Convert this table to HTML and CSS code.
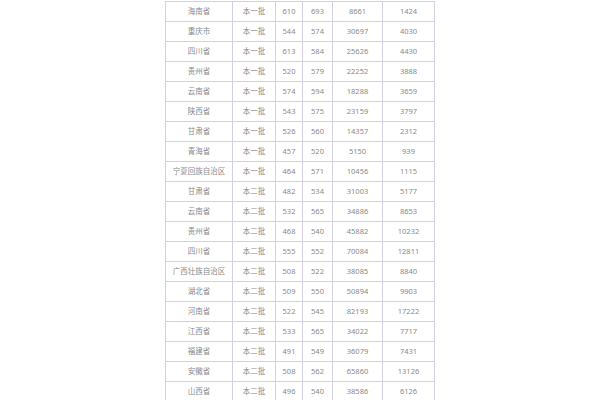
FILE: index.html
```html
<!DOCTYPE html>
<html lang="zh">
<head>
<meta charset="utf-8">
<link rel="stylesheet" href="styles.css">
</head>
<body>
<table class="score-table">
<colgroup>
<col class="c-prov"><col class="c-batch"><col class="c-a"><col class="c-b"><col class="c-c"><col class="c-d">
</colgroup>
<tbody>
<tr><td>海南省</td><td>本一批</td><td>610</td><td>693</td><td>8661</td><td>1424</td></tr>
<tr><td>重庆市</td><td>本一批</td><td>544</td><td>574</td><td>30697</td><td>4030</td></tr>
<tr><td>四川省</td><td>本一批</td><td>613</td><td>584</td><td>25626</td><td>4430</td></tr>
<tr><td>贵州省</td><td>本一批</td><td>520</td><td>579</td><td>22252</td><td>3888</td></tr>
<tr><td>云南省</td><td>本一批</td><td>574</td><td>594</td><td>18288</td><td>3659</td></tr>
<tr><td>陕西省</td><td>本一批</td><td>543</td><td>575</td><td>23159</td><td>3797</td></tr>
<tr><td>甘肃省</td><td>本一批</td><td>526</td><td>560</td><td>14357</td><td>2312</td></tr>
<tr><td>青海省</td><td>本一批</td><td>457</td><td>520</td><td>5150</td><td>939</td></tr>
<tr><td>宁夏回族自治区</td><td>本一批</td><td>464</td><td>571</td><td>10456</td><td>1115</td></tr>
<tr><td>甘肃省</td><td>本二批</td><td>482</td><td>534</td><td>31003</td><td>5177</td></tr>
<tr><td>云南省</td><td>本二批</td><td>532</td><td>565</td><td>34886</td><td>8653</td></tr>
<tr><td>贵州省</td><td>本二批</td><td>468</td><td>540</td><td>45882</td><td>10232</td></tr>
<tr><td>四川省</td><td>本二批</td><td>555</td><td>552</td><td>70084</td><td>12811</td></tr>
<tr><td>广西壮族自治区</td><td>本二批</td><td>508</td><td>522</td><td>38085</td><td>8840</td></tr>
<tr><td>湖北省</td><td>本二批</td><td>509</td><td>550</td><td>50894</td><td>9903</td></tr>
<tr><td>河南省</td><td>本二批</td><td>522</td><td>545</td><td>82193</td><td>17222</td></tr>
<tr><td>江西省</td><td>本二批</td><td>533</td><td>565</td><td>34022</td><td>7717</td></tr>
<tr><td>福建省</td><td>本二批</td><td>491</td><td>549</td><td>36079</td><td>7431</td></tr>
<tr><td>安徽省</td><td>本二批</td><td>508</td><td>562</td><td>65860</td><td>13126</td></tr>
<tr><td>山西省</td><td>本二批</td><td>496</td><td>540</td><td>38586</td><td>6126</td></tr>
</tbody>
</table>
</body>
</html>
```

FILE: styles.css
```css
html, body {
  margin: 0;
  padding: 0;
  background: #ffffff;
}
body {
  padding-top: 1px;
  font-family: "Noto Sans", "Noto Sans CJK SC", sans-serif;
}
.score-table {
  margin: 0 auto;
  width: 270px;
  table-layout: fixed;
  border-collapse: collapse;
  font-size: 7.5px;
  color: #8a8a8a;
}
.c-prov { width: 67px; }
.c-batch { width: 43px; }
.c-a { width: 27px; }
.c-b { width: 30px; }
.c-c { width: 50px; }
.c-d { width: 52px; }
.score-table td {
  border: 1px solid #d3cfe6;
  height: 19px;
  padding: 0;
  text-align: center;
  vertical-align: middle;
  white-space: nowrap;
  line-height: 1;
}
```
